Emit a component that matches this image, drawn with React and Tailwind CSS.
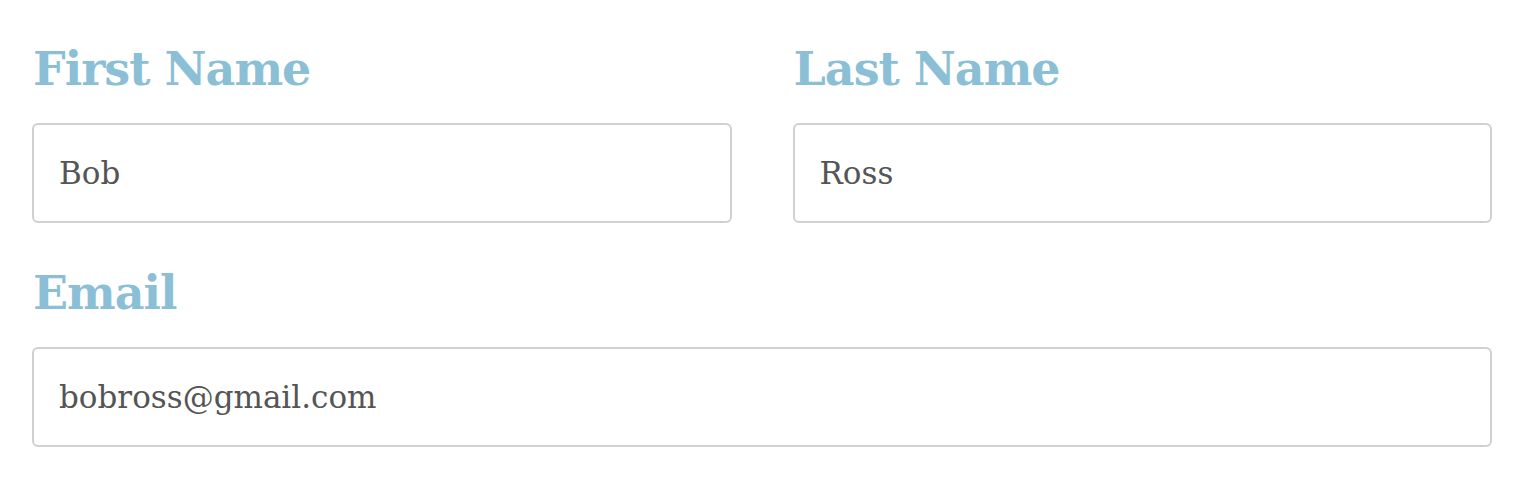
const Field = ({ label, value, type = "text" }) => (
  <label className="flex flex-col">
    <span className="text-[46px] font-bold leading-[60px] tracking-[-1px] text-[#8bbfd6] pl-[1px] pt-[8px] pb-[24px]">
      {label}
    </span>
    <input
      type={type}
      defaultValue={value}
      className="h-[100px] rounded-[6px] border-2 border-[#d0d0d0] bg-white px-[25px] text-[31px] text-[#555555] outline-none"
    />
  </label>
);

export default function App() {
  return (
    <div
      className="min-h-screen bg-white px-[32px] pt-[31px]"
      style={{ fontFamily: '"DejaVu Serif", "Liberation Serif", serif' }}
    >
      <div className="grid grid-cols-2 gap-x-[61px]">
        <Field label="First Name" value="Bob" />
        <Field label="Last Name" value="Ross" />
      </div>
      <div className="mt-[32px]">
        <Field label="Email" value="bobross@gmail.com" type="email" />
      </div>
    </div>
  );
}
